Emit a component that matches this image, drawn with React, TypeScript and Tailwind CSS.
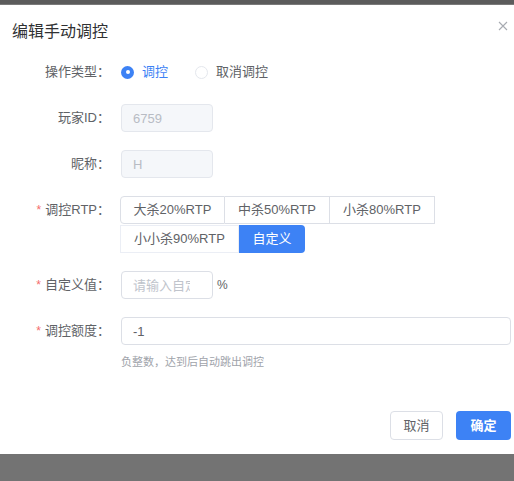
import React from "react";

const font = { fontFamily: '"Liberation Sans", "Noto Sans CJK SC", sans-serif' };

function Label({ text, required }: { text: string; required?: boolean }) {
  return (
    <div className="w-[110px] shrink-0 h-[28px] flex items-center justify-end text-[13px] text-[#606266]">
      {required && <span className="text-[#f56c6c] mr-[4px] text-[12px]">*</span>}
      <span>{text}</span>
    </div>
  );
}

export default function App() {
  return (
    <div className="w-[514px] h-[481px] overflow-hidden bg-[#6f6f6f] flex flex-col" style={font}>
      <div className="h-[5px] bg-[#5c5c5c] border-b border-[#7a7a7a]" />
      <div className="bg-white h-[449px] flex flex-col">
        {/* header */}
        <div className="relative h-[53px] flex items-start">
          <div className="pl-[12px] pt-[16px] text-[16px] leading-[22px] text-[#303133]">编辑手动调控</div>
          <svg className="absolute right-[6px] top-[16px]" width="10" height="10" viewBox="0 0 10 10">
            <path d="M1 1 L9 9 M9 1 L1 9" stroke="#a8abb2" strokeWidth="1.1" />
          </svg>
        </div>

        {/* form */}
        <div className="flex flex-col gap-[18px]">
          <div className="flex items-center gap-[11px]">
            <Label text="操作类型：" />
            <div className="flex items-center h-[28px] text-[13px]">
              <span className="w-[13px] h-[13px] rounded-full bg-[#3d82f5] flex items-center justify-center">
                <span className="w-[4px] h-[4px] rounded-full bg-white" />
              </span>
              <span className="ml-[8px] text-[#3d82f5]">调控</span>
              <span className="ml-[27px] w-[13px] h-[13px] rounded-full border border-[#e4e7ed] bg-white" />
              <span className="ml-[8px] text-[#606266]">取消调控</span>
            </div>
          </div>

          <div className="flex items-center gap-[11px]">
            <Label text="玩家ID：" />
            <input
              readOnly
              disabled
              defaultValue="6759"
              className="w-[92px] h-[28px] rounded-[4px] border border-[#e4e7ed] bg-[#f5f7fa] px-[11px] text-[13px] text-[#b8bcc4] outline-none"
            />
          </div>

          <div className="flex items-center gap-[11px]">
            <Label text="昵称：" />
            <input
              readOnly
              disabled
              defaultValue="H"
              className="w-[92px] h-[28px] rounded-[4px] border border-[#e4e7ed] bg-[#f5f7fa] px-[11px] text-[13px] text-[#b8bcc4] outline-none"
            />
          </div>

          <div className="flex items-start gap-[11px]">
            <Label text="调控RTP：" required />
            <div className="flex flex-col text-[13px] text-[#606266] -ml-[1px]">
              <div className="flex h-[28px]">
                <div className="w-[105px] flex items-center justify-center border border-[#dcdfe6] rounded-l-[4px]">大杀20%RTP</div>
                <div className="w-[105px] flex items-center justify-center border border-l-0 border-[#dcdfe6]">中杀50%RTP</div>
                <div className="w-[105px] flex items-center justify-center border border-l-0 border-[#dcdfe6]">小杀80%RTP</div>
              </div>
              <div className="flex h-[28px] mt-[1px]">
                <div className="w-[119px] flex items-center justify-center border border-[#ebeef5]">小小杀90%RTP</div>
                <div className="w-[66px] flex items-center justify-center bg-[#3d82f5] text-white rounded-r-[4px]">自定义</div>
              </div>
            </div>
          </div>

          <div className="flex items-center gap-[11px]">
            <Label text="自定义值：" required />
            <input
              readOnly
              placeholder="请输入自定义值"
              className="w-[92px] h-[28px] rounded-[4px] border border-[#dcdfe6] bg-white pl-[11px] pr-[22px] text-[13px] text-[#606266] placeholder:text-[#c0c4cc] outline-none"
            />
            <span className="-ml-[7px] text-[12px] text-[#606266]">%</span>
          </div>

          <div className="flex flex-col">
            <div className="flex items-center gap-[11px]">
              <Label text="调控额度：" required />
              <input
                readOnly
                defaultValue="-1"
                className="w-[390px] h-[28px] rounded-[4px] border border-[#dcdfe6] bg-white px-[11px] text-[13px] text-[#606266] outline-none"
              />
            </div>
            <div className="pl-[121px] mt-[10px] text-[11px] leading-[14px] text-[#a0a3aa]">负整数，达到后自动跳出调控</div>
          </div>
        </div>

        {/* footer */}
        <div className="mt-auto mb-[14px] flex justify-end gap-[13px] pr-[3px]">
          <div className="w-[53px] h-[29px] rounded-[4px] border border-[#dcdfe6] bg-white flex items-center justify-center text-[13px] text-[#606266]">
            取消
          </div>
          <div className="w-[55px] h-[29px] rounded-[4px] bg-[#3d82f5] flex items-center justify-center text-[13px] font-bold text-white">
            确定
          </div>
        </div>
      </div>
      <div className="flex-1 bg-[#737373]" />
    </div>
  );
}
